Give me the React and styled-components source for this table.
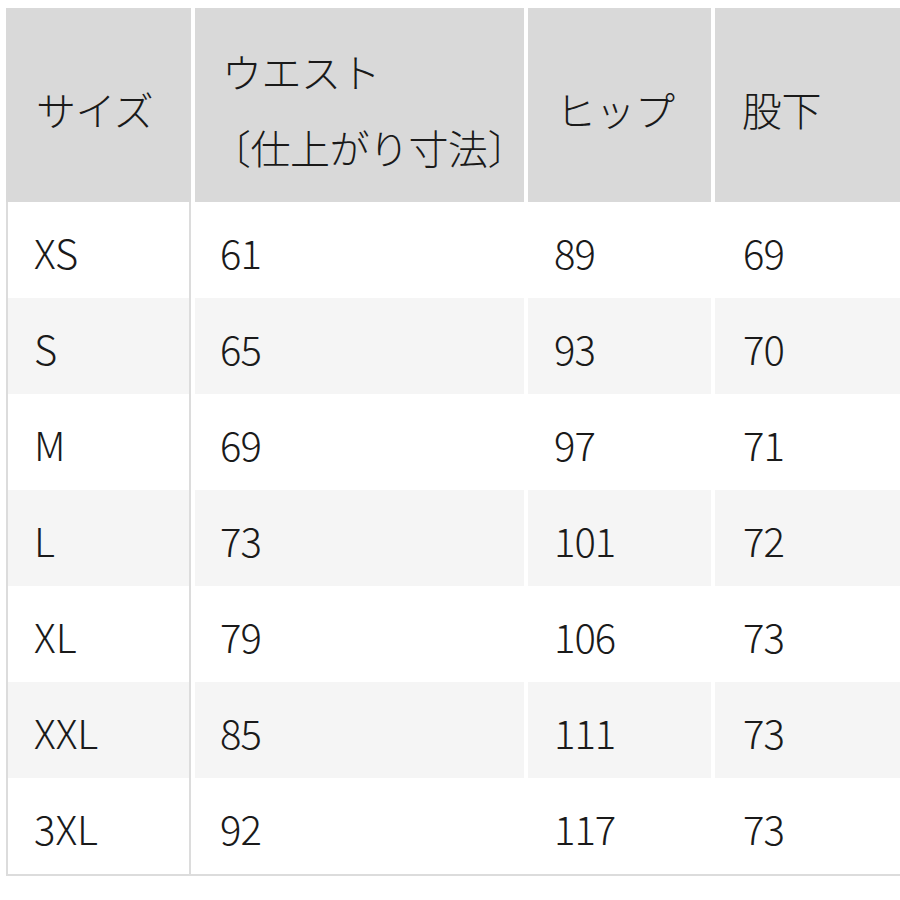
import React from 'react';
import styled, { createGlobalStyle } from 'styled-components';

const GlobalStyle = createGlobalStyle`
    html, body {
        margin: 0;
        padding: 0;
        background: #ffffff;
    }
    body {
        font-family: "Noto Sans CJK JP", "Noto Sans", sans-serif;
        font-weight: 300;
        color: #1a1a1a;
    }
`

const Page = styled.div`
    width: 900px;
    height: 900px;
    overflow: hidden;
    padding: 8px 0 0 6px;
    box-sizing: border-box;
`
const Table = styled.div`
    width: 960px;
`
const Columns = styled.div`
    display: grid;
    grid-template-columns: 185px 329px 183px 1fr;
    column-gap: 4px;
`
const HeaderRow = styled(Columns)`
    height: 194px;
`
const HeadCell = styled.div`
    background: #d9d9d9;
    display: flex;
    flex-direction: column;
    justify-content: center;
    padding: 8px 0 0 ${p => p.$indent || 29}px;
    box-sizing: border-box;
    font-size: 40px;
    line-height: 76px;
    letter-spacing: -0.5px;
`
// the full-width bracket carries its own left bearing; pull it back to the text edge
const BracketLine = styled.div`
    margin-left: -11px;
`
const Body = styled.div`
    border-bottom: 2px solid #dcdcdc;
`
const Row = styled(Columns)`
    height: 96px;
`
const Cell = styled.div`
    background: ${p => (p.$shaded ? '#f5f5f5' : '#ffffff')};
    display: flex;
    align-items: center;
    padding: 4px 0 0 ${p => p.$indent || 26}px;
    box-sizing: border-box;
    font-size: 40px;
    letter-spacing: -1px;
`
const SizeCell = styled(Cell)`
    border-left: 2px solid #dcdcdc;
    border-right: 2px solid #dcdcdc;
    letter-spacing: 0;
`

const rows = [
    ['XS', '61', '89', '69'],
    ['S', '65', '93', '70'],
    ['M', '69', '97', '71'],
    ['L', '73', '101', '72'],
    ['XL', '79', '106', '73'],
    ['XXL', '85', '111', '73'],
    ['3XL', '92', '117', '73'],
]

const App = () => {
    return (
        <Page>
            <GlobalStyle />
            <Table>
                <HeaderRow>
                    <HeadCell $indent={30}>サイズ</HeadCell>
                    <HeadCell $indent={27}>
                        <div>ウエスト</div>
                        <BracketLine>〔仕上がり寸法〕</BracketLine>
                    </HeadCell>
                    <HeadCell $indent={28}>ヒップ</HeadCell>
                    <HeadCell $indent={27}>股下</HeadCell>
                </HeaderRow>
                <Body>
                    {rows.map((r, i) => (
                        <Row key={r[0]}>
                            <SizeCell $shaded={i % 2 === 1} $indent={26}>{r[0]}</SizeCell>
                            <Cell $shaded={i % 2 === 1} $indent={25}>{r[1]}</Cell>
                            <Cell $shaded={i % 2 === 1} $indent={26}>{r[2]}</Cell>
                            <Cell $shaded={i % 2 === 1} $indent={28}>{r[3]}</Cell>
                        </Row>
                    ))}
                </Body>
            </Table>
        </Page>
    )
}

export default App
